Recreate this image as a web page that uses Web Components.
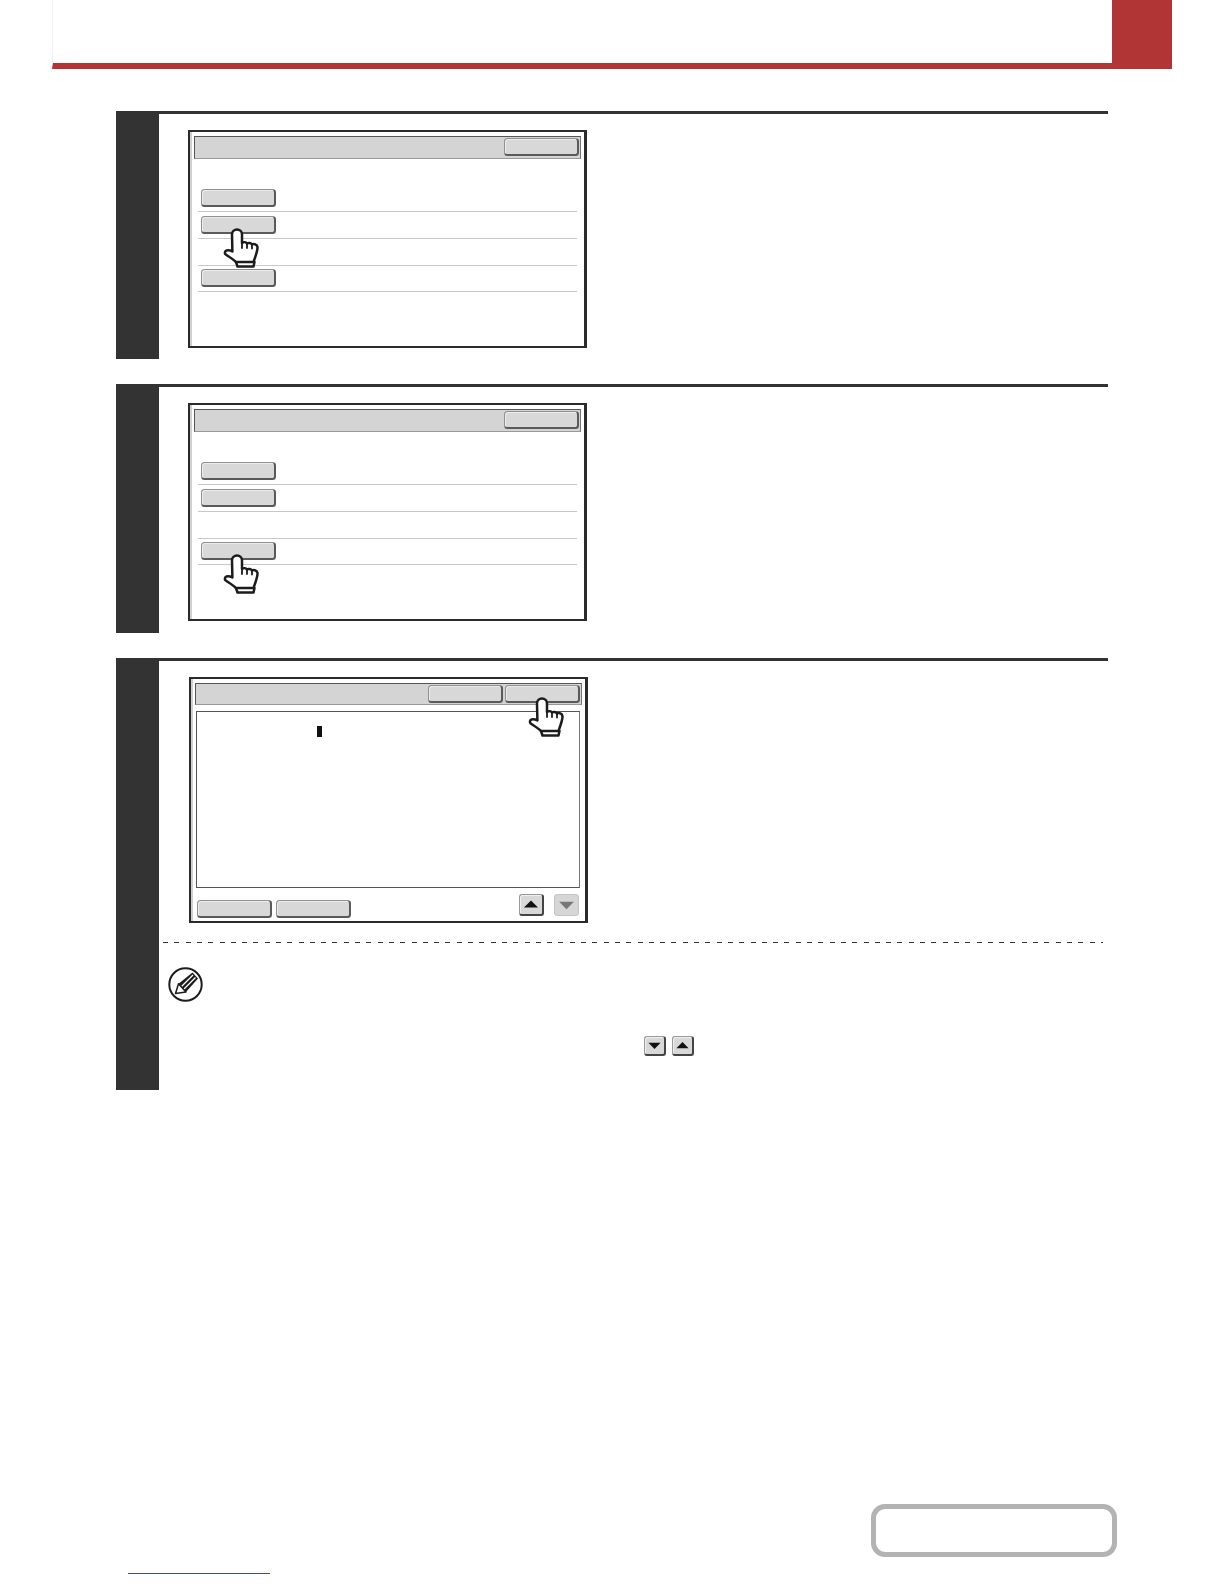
<!DOCTYPE html>
<html lang="en"><head><meta charset="utf-8"><title>Manual page</title>
<style>html,body{margin:0;background:#fff}body{font-family:"Liberation Sans",sans-serif}</style>
</head><body>
<x-page>
  <x-header></x-header>
  <x-step h="247.5" gap="42">
    <x-panel h="218" w="399">
      <x-titlebar><x-key></x-key></x-titlebar>
      <x-rows><x-row><x-key></x-key></x-row><x-row><x-key></x-key></x-row><x-row></x-row><x-row><x-key></x-key></x-row></x-rows>
      <x-hand style="left:34px;top:97px"></x-hand>
    </x-panel>
  </x-step>
  <x-step h="249" gap="25.5">
    <x-panel h="218" w="399">
      <x-titlebar><x-key></x-key></x-titlebar>
      <x-rows><x-row><x-key></x-key></x-row><x-row><x-key></x-key></x-row><x-row></x-row><x-row><x-key></x-key></x-row></x-rows>
      <x-hand style="left:34px;top:150px"></x-hand>
    </x-panel>
  </x-step>
  <x-step h="432" gap="24.5" inset="30">
    <x-panel h="246" w="399">
      <x-titlebar><x-key></x-key><x-key></x-key></x-titlebar>
      <x-textbox></x-textbox>
      <x-footbar>
        <x-key></x-key><x-key></x-key><span style="flex:1"></span>
        <x-arrow dir="up"></x-arrow><x-arrow dir="down" disabled></x-arrow>
      </x-footbar>
      <x-hand style="left:338px;top:19px"></x-hand>
    </x-panel>
    <x-note slot="note">
      <x-arrow dir="down" small></x-arrow><x-arrow dir="up" small></x-arrow>
    </x-note>
  </x-step>
  <x-return></x-return>
</x-page>
<script>
function def(name, css, html, init){
  customElements.define(name, class extends HTMLElement{
    constructor(){super();const r=this.attachShadow({mode:'open'});r.innerHTML='<style>'+css+'</style>'+html;}
    connectedCallback(){if(init)init(this,this.shadowRoot);}
  });
}
def('x-page',':host{display:block;width:1224px;height:1584px;overflow:hidden;position:relative;background:#fff}','<slot></slot>');
def('x-header',
 ':host{display:flex;box-sizing:border-box;margin-left:52px;width:1120px;height:69px;border-bottom:6px solid #b13535;border-left:1px solid #f2f2f2;background:#fff}'+
 '.fill{flex:1}.tab{width:60px;background:#b13535}',
 '<div class="fill"></div><div class="tab"></div>');
def('x-step',
 ':host{display:grid;grid-template-columns:43px 1fr;grid-template-rows:auto 1fr;box-sizing:border-box;margin-left:116px;width:992px;border-top:3px solid #333}'+
 '.num{grid-row:1 / span 2;background:#333}.main{padding:16px 0 0 var(--inset,29px)}.note{min-width:0}',
 '<div class="num"></div><div class="main"><slot></slot></div><div class="note"><slot name="note"></slot></div>',
 (el)=>{el.style.height=el.getAttribute('h')+'px';el.style.marginTop=el.getAttribute('gap')+'px';
   if(el.hasAttribute('inset'))el.style.setProperty('--inset',el.getAttribute('inset')+'px');});
def('x-panel',
 ':host{display:flex;flex-direction:column;position:relative;box-sizing:border-box;border:2px solid #2b2b2b;border-right-width:3px;padding:4px 3px 0 4px;background:#fff;box-shadow:inset 2px 0 0 #cfcfcf}',
 '<slot></slot>',
 (el)=>{el.style.width=el.getAttribute('w')+'px';el.style.height=el.getAttribute('h')+'px';});
def('x-titlebar',
 ':host{display:flex;justify-content:flex-end;align-items:center;gap:1.5px;box-sizing:border-box;height:22.5px;padding-right:1.5px;background:#d4d4d4;border:1px solid #666;border-color:#555 #777 #999 #555}',
 '<slot></slot>');
def('x-rows',':host{display:block;margin:27.2px 4px 0 4px}','<slot></slot>');
def('x-row',
 ':host{display:flex;align-items:center;box-sizing:border-box;height:26.67px;padding:0 0 0.6px 3px;border-bottom:1px solid #c8c8c8}',
 '<slot></slot>');
def('x-key',
 ':host{display:block;box-sizing:border-box;width:75px;height:18px;background:#d8d8d8;border-radius:3.5px;border:1px solid #909090;border-right:2px solid #5a5a5a;border-bottom:2px solid #5a5a5a;box-shadow:inset 1px 1px 0 #ececec}',
 '');
def('x-textbox',
 ':host{display:block;box-sizing:border-box;height:177px;margin:5.5px 2px 0 1px;border:1.5px solid #555;border-right-color:#777;background:#fff;position:relative}'+
 '.caret{position:absolute;left:120px;top:14px;width:4.5px;height:11px;background:#111}',
 '<div class="caret"></div>');
def('x-footbar',
 ':host{display:flex;align-items:flex-start;gap:4px;margin:6px 3.3px 0 2.3px;height:24px}'+
 '::slotted(x-key){align-self:flex-end}::slotted(x-arrow[disabled]){margin-left:5.5px}',
 '<slot></slot>');
def('x-arrow',
 ':host{display:block;box-sizing:border-box;width:25px;height:22px;background:#d8d8d8;border-radius:3px;border:1px solid #999;border-right:2px solid #444;border-bottom:2px solid #444;box-shadow:inset 1px 1px 0 #f0f0f0;flex:none}'+
 ':host([disabled]){background:#d6d6d6;border:1px solid #c4c4c4;box-shadow:none}'+
 ':host([small]){width:22px;height:20px}'+
 'svg{display:block;width:100%;height:100%}',
 '<svg viewBox="0 0 25 21" aria-hidden="true"><path fill="#111"/></svg>',
 (el,r)=>{const p=r.querySelector('path');
   p.setAttribute('d',el.getAttribute('dir')==='up'?'M12.5 6L20.5 14H4.5Z':'M4.5 7H20.5L12.5 15Z');
   if(el.hasAttribute('disabled'))p.setAttribute('fill','#777');
 });
def('x-hand',
 ':host{position:absolute;display:block;width:36px;height:40px}svg{display:block;overflow:visible}',
 '<svg width="36" height="40" viewBox="0 0 36 40" aria-hidden="true"><g fill="#fff" stroke="#1c1c1c" stroke-width="2.5" stroke-linejoin="round" stroke-linecap="round">'+
 '<path d="M12 33l1.5 4.5h16l1-4.5"/>'+
 '<path d="M8 5.5a5 5 0 0 1 10 0v8.5c1.5-1 4-1 5 .5c1.5-1 4-.6 5 1c2-1 5 0 5.5 2.5c.3 3-1.8 9-4 15H12C9 30 4.5 27.500 1.500 25.300c-1-1-.7-3.300 1-3.800c2-.5 4 0 5.900 1Z"/>'+
 '<path fill="none" stroke-width="1.8" d="M18 14v5M23 14.5v4.5M28 15.5v4"/></g></svg>');
def('x-note',
 ':host{display:block;position:relative;box-sizing:border-box;height:149px;padding-top:19px}'+
 '.dash{margin:0 5px 0 3.5px;height:1.5px;background:repeating-linear-gradient(90deg,#333 0 5px,transparent 5px 11.3px)}'+
 '.icon{position:absolute;left:9px;top:44.5px}'+
 '.pair{position:absolute;left:484.5px;top:113px;display:flex;gap:6px}',
 '<div class="dash"></div>'+
 '<svg class="icon" width="35" height="35" viewBox="0 0 35 35" aria-hidden="true">'+
 '<circle cx="17.5" cy="17.5" r="16.2" fill="#fff" stroke="#1c1c1c" stroke-width="2"/>'+
 '<path d="M10.5 16.8L24.5 5.5L30 11.5L18 25Z" fill="#1c1c1c"/>'+
 '<path d="M13.5 19.5L25 8M16 22L27.5 10.5" stroke="#fff" stroke-width="1.3"/>'+
 '<path d="M10.5 16.8L7.5 26.5L18 25Z" fill="#fff" stroke="#1c1c1c" stroke-width="1.5" stroke-linejoin="round"/></svg>'+
 '<div class="pair"><slot></slot></div>');
def('x-return',
 ':host{display:block;margin:414.5px 0 0 871px;width:246px}'+
 '.box{box-sizing:border-box;height:53px;border:5px solid #b3b3b3;border-radius:14px;background:#fff}'+
 '.link{position:absolute;left:128px;top:1573px;width:142px;height:1px;background:#3a4bb5}',
 '<div class="box"></div><div class="link"></div>');
</script>
</body></html>
